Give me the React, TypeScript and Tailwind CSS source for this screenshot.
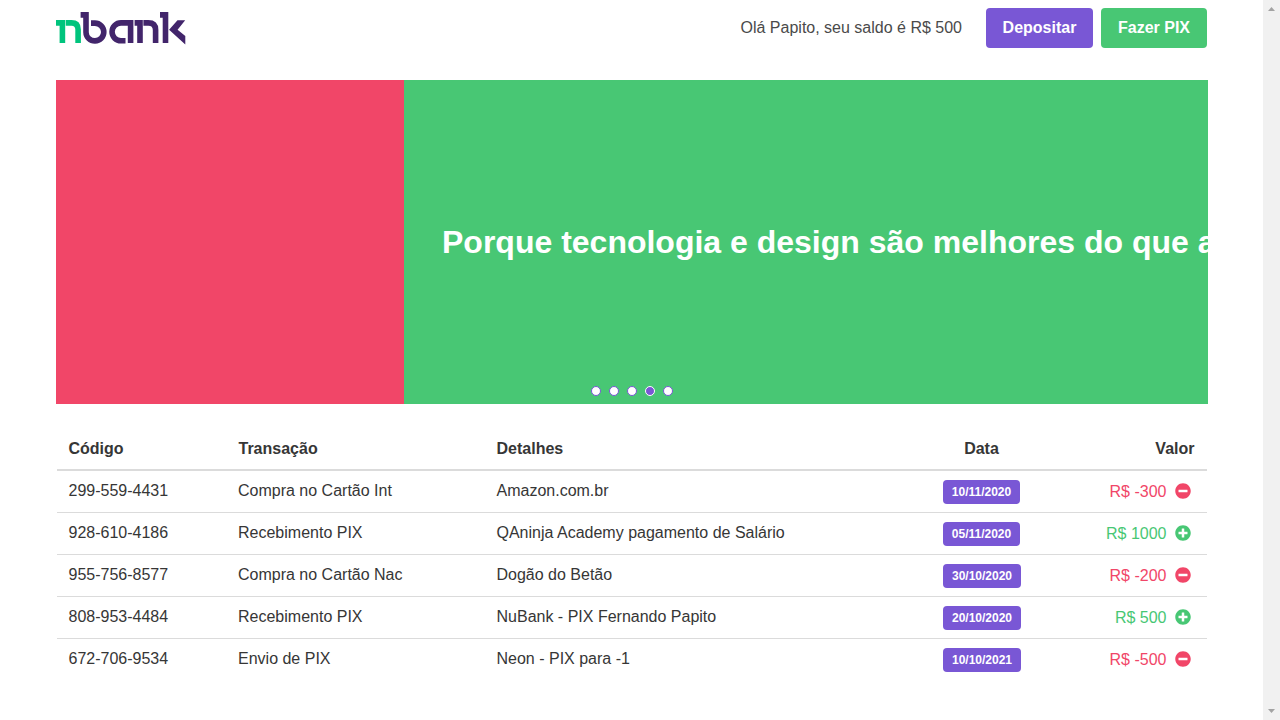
import { FaMinusCircle, FaPlusCircle } from "react-icons/fa";

const rows = [
  { code: "299-559-4431", type: "Compra no Cartão Int", details: "Amazon.com.br", date: "10/11/2020", value: -300, badge: "w-[77px]" },
  { code: "928-610-4186", type: "Recebimento PIX", details: "QAninja Academy pagamento de Salário", date: "05/11/2020", value: 1000, badge: "w-[77px]" },
  { code: "955-756-8577", type: "Compra no Cartão Nac", details: "Dogão do Betão", date: "30/10/2020", value: -200, badge: "w-[78px]" },
  { code: "808-953-4484", type: "Recebimento PIX", details: "NuBank - PIX Fernando Papito", date: "20/10/2020", value: 500, badge: "w-[78px]" },
  { code: "672-706-9534", type: "Envio de PIX", details: "Neon - PIX para -1", date: "10/10/2021", value: -500, badge: "w-[78px]" },
];

const grid = "grid grid-cols-[170px_258px_409px_175px_138px]";

function Logo() {
  return (
    <svg width="130" height="34" viewBox="0 0 130 34" fill="none" strokeWidth="5.6">
      <path stroke="#00c47d" d="M0 10.9H6.4V31M9.8 10.9H15.5Q22.1 10.9 22.1 17.5V31" />
      <g stroke="#42256b">
        <path d="M24.6 2.9H30V20.2A8.9 8.9 0 1 0 38.9 11.1H35" />
        <path d="M74.6 31V10.9H65A8.95 8.95 0 0 0 65 28.8H69.5" />
        <path d="M78.6 10.9H84V31M87.4 10.9H92.3Q99.6 10.9 99.6 18V31" />
        <path d="M104 2.9H109.5V31" />
      </g>
      <path fill="#42256b" d="M121.5 8.2H129.2L121.6 17.8L129.3 24V32.5L113.1 17.8Z" />
    </svg>
  );
}

export default function App() {
  return (
    <div className="flex h-[720px] w-[1280px] overflow-hidden bg-white font-['Liberation_Sans',Arial,sans-serif] text-base leading-6 text-[#363636]">
      <main className="w-[1263px] shrink-0 pl-14">
        <header className="flex h-20 w-[1151px] items-start pt-2">
          <div className="pt-1"><Logo /></div>
          <div className="ml-auto mr-6 pt-2 text-[#4a4a4a]">Olá Papito, seu saldo é R$ 500</div>
          <button className="mr-2 h-10 w-[107px] rounded bg-[#7957d5] font-bold text-white">Depositar</button>
          <button className="h-10 w-[106px] rounded bg-[#48c774] font-bold text-white">Fazer PIX</button>
        </header>

        <section className="relative flex h-[324px] w-[1152px] overflow-hidden">
          <div className="w-[348px] shrink-0 bg-[#f14668]" />
          <div className="flex w-[1152px] shrink-0 items-center bg-[#48c774] pl-[38px]">
            <h1 className="whitespace-nowrap text-[32px] font-semibold leading-9 text-white">Porque tecnologia e design são melhores do que a</h1>
          </div>
          <div className="absolute bottom-2 left-[535px] flex gap-2">
            {[0, 1, 2, 3, 4].map((i) => (
              <span key={i} className={i === 3 ? "size-2.5 rounded-full border border-white bg-[#7957d5]" : "size-2.5 rounded-full border border-[#7957d5] bg-white"} />
            ))}
          </div>
        </section>

        <section className="ml-px mt-6 w-[1150px]">
          <div className={`${grid} h-[43px] border-b-2 border-[#dbdbdb] pt-[9px] font-semibold`}>
            <div className="pl-[11.5px]">Código</div>
            <div className="pl-[11.5px]">Transação</div>
            <div className="pl-[11.5px]">Detalhes</div>
            <div className="text-center">Data</div>
            <div className="pr-[12.5px] text-right">Valor</div>
          </div>
          {rows.map((row) => (
            <div key={row.code} className={`${grid} h-[42px] items-start border-b border-[#dbdbdb] pt-2 last:border-b-0`}>
              <div className="pl-[11.5px]">{row.code}</div>
              <div className="pl-[11px]">{row.type}</div>
              <div className="pl-[11.5px]">{row.details}</div>
              <div className="pl-[49px] pt-px">
                <span className={`${row.badge} flex h-6 items-center justify-center rounded bg-[#7957d5] text-xs font-semibold text-white`}>{row.date}</span>
              </div>
              <div className={`${row.value < 0 ? "text-[#f14668]" : "text-[#48c774]"} flex items-center justify-end pr-[16.5px] pt-px`}>
                <span>R$ {row.value}</span>
                {row.value < 0 ? <FaMinusCircle className="mb-[2px] ml-2 size-4" /> : <FaPlusCircle className="mb-[2px] ml-2 size-4" />}
              </div>
            </div>
          ))}
        </section>
      </main>
      <aside className="flex w-[17px] shrink-0 flex-col items-center justify-between bg-[#f1f1f1] py-[7px]">
        <svg width="7" height="4" viewBox="0 0 7 4" fill="#a3a3a3"><path d="M3.5 0L7 4H0Z" /></svg>
        <svg width="7" height="4" viewBox="0 0 7 4" fill="#a3a3a3"><path d="M0 0H7L3.5 4Z" /></svg>
      </aside>
    </div>
  );
}
